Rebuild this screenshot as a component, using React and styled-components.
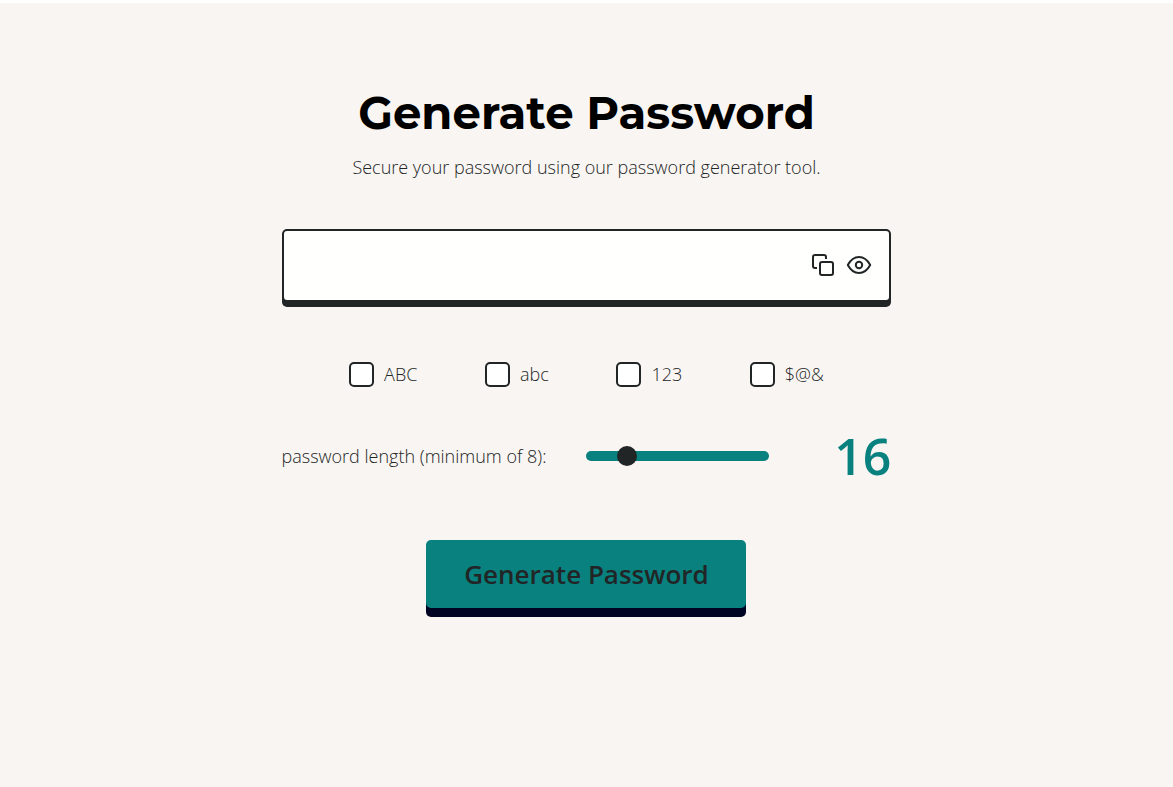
import React, { useState } from "react";
import styled, { createGlobalStyle } from "styled-components";

const ink = "#222526";
const teal = "#08817f";

const GlobalStyle = createGlobalStyle`
  *, *::before, *::after { box-sizing: border-box; }
  html { background: #fff; }
  body {
    margin: 0;
    color: ${ink};
    font-family: "Open Sans", sans-serif;
    font-size: 18px;
    font-weight: 300;
    line-height: 24px;
  }
`;

const Page = styled.main`
  min-height: calc(100vh - 3px);
  margin-top: 3px;
  padding: 80px 0 48px;
  background: #f9f5f2;
  display: flex;
  flex-direction: column;
  align-items: center;
`;

const Title = styled.h1`
  margin: 0;
  color: #000;
  font-family: Montserrat, Inter, sans-serif;
  font-size: 45px;
  font-weight: 700;
  line-height: 60px;
  text-align: center;
`;

const Tagline = styled.p`
  margin: 12px 0 50px;
  text-align: center;
`;

const Form = styled.form`
  width: 52%;
  min-width: 560px;
  display: flex;
  flex-direction: column;
`;

const Field = styled.div`
  height: 73px;
  padding: 0 16px 2px;
  display: flex;
  align-items: center;
  gap: 8px;
  background: #fffffe;
  border: 2px solid ${ink};
  border-radius: 5px;
  box-shadow: 0 5px 0 ${ink};
`;

const PasswordInput = styled.input`
  flex: 1;
  min-width: 0;
  height: 100%;
  padding: 0;
  border: 0;
  outline: 0;
  background: transparent;
  color: ${ink};
  font: inherit;
  font-size: 24px;
`;

const IconButton = styled.button`
  width: 28px;
  height: 28px;
  padding: 0;
  display: grid;
  place-items: center;
  border: 0;
  background: none;
  color: ${ink};
  cursor: pointer;
`;

const Options = styled.div`
  margin-top: 60px;
  display: flex;
  justify-content: space-evenly;
`;

const Option = styled.label`
  display: flex;
  align-items: flex-start;
  gap: 10px;
  cursor: pointer;
`;

const Checkbox = styled.input`
  appearance: none;
  width: 25px;
  height: 25px;
  margin: 0;
  background: #fff;
  border: 2px solid ${ink};
  border-radius: 5px;
  cursor: pointer;
  &:checked { background: ${teal}; }
`;

const LengthRow = styled.div`
  margin-top: 37px;
  display: flex;
  align-items: center;
`;

const Slider = styled.input`
  appearance: none;
  width: 30%;
  height: 10px;
  margin: 0 auto 0 39px;
  background: ${teal};
  border-radius: 5px;
  cursor: pointer;
  &::-webkit-slider-thumb {
    appearance: none;
    width: 20px;
    height: 20px;
    background: ${ink};
    border-radius: 50%;
  }
`;

const LengthValue = styled.output`
  color: ${teal};
  font-size: 50px;
  font-weight: 600;
  line-height: 64px;
`;

const GenerateButton = styled.button`
  align-self: center;
  width: 320px;
  height: 68px;
  margin-top: 52px;
  padding: 0;
  border: 0;
  border-radius: 5px;
  background: ${teal};
  box-shadow: 0 9px 0 #000424;
  color: ${ink};
  font-family: inherit;
  font-size: 26px;
  font-weight: 600;
  cursor: pointer;
`;

const CopyIcon = () => (
  <svg width="24" height="24" viewBox="0 0 24 24" fill="none" stroke="currentColor" strokeWidth="2" strokeLinejoin="round" aria-hidden="true">
    <rect x="9" y="9" width="13" height="13" rx="2" />
    <path d="M6 15H4a2 2 0 0 1-2-2V4a2 2 0 0 1 2-2h9a2 2 0 0 1 2 2v2" />
  </svg>
);

const EyeIcon = () => (
  <svg width="26" height="26" viewBox="0 0 26 26" fill="none" stroke="currentColor" strokeWidth="2" strokeLinejoin="round" aria-hidden="true">
    <path d="M1.8 13C4.5 8 8.5 5 13 5s8.5 3 11.2 8c-2.7 5-6.7 8-11.2 8S4.500 18 1.800 13z" />
    <circle cx="13" cy="13" r="3.2" />
  </svg>
);

const sets = [
  { label: "ABC", chars: "ABCDEFGHIJKLMNOPQRSTUVWXYZ" },
  { label: "abc", chars: "abcdefghijklmnopqrstuvwxyz" },
  { label: "123", chars: "0123456789" },
  { label: "$@&", chars: "$@&!#%*?" },
];

export default function App() {
  const [password, setPassword] = useState("");
  const [visible, setVisible] = useState(false);
  const [length, setLength] = useState(16);
  const [chosen, setChosen] = useState([]);

  const toggle = (label) =>
    setChosen((now) => (now.includes(label) ? now.filter((l) => l !== label) : [...now, label]));

  const generate = (event) => {
    event.preventDefault();
    const pool = sets.filter((s) => chosen.includes(s.label)).map((s) => s.chars).join("");
    if (!pool) return;
    const values = crypto.getRandomValues(new Uint32Array(length));
    setPassword(Array.from(values, (v) => pool[v % pool.length]).join(""));
  };

  return (
    <>
      <GlobalStyle />
      <Page>
        <Title>Generate Password</Title>
        <Tagline>Secure your password using our password generator tool.</Tagline>
        <Form onSubmit={generate}>
          <Field>
            <PasswordInput
              type={visible ? "text" : "password"}
              aria-label="Generated password"
              value={password}
              readOnly
            />
            <IconButton type="button" aria-label="Copy password" onClick={() => navigator.clipboard?.writeText(password)}>
              <CopyIcon />
            </IconButton>
            <IconButton type="button" aria-label="Show password" onClick={() => setVisible(!visible)}>
              <EyeIcon />
            </IconButton>
          </Field>
          <Options>
            {sets.map(({ label }) => (
              <Option key={label}>
                <Checkbox type="checkbox" checked={chosen.includes(label)} onChange={() => toggle(label)} />
                {label}
              </Option>
            ))}
          </Options>
          <LengthRow>
            <label htmlFor="length">password length (minimum of 8):</label>
            <Slider
              id="length"
              type="range"
              min="8"
              max="50"
              value={length}
              onChange={(e) => setLength(Number(e.target.value))}
            />
            <LengthValue htmlFor="length">{length}</LengthValue>
          </LengthRow>
          <GenerateButton type="submit">Generate Password</GenerateButton>
        </Form>
      </Page>
    </>
  );
}
